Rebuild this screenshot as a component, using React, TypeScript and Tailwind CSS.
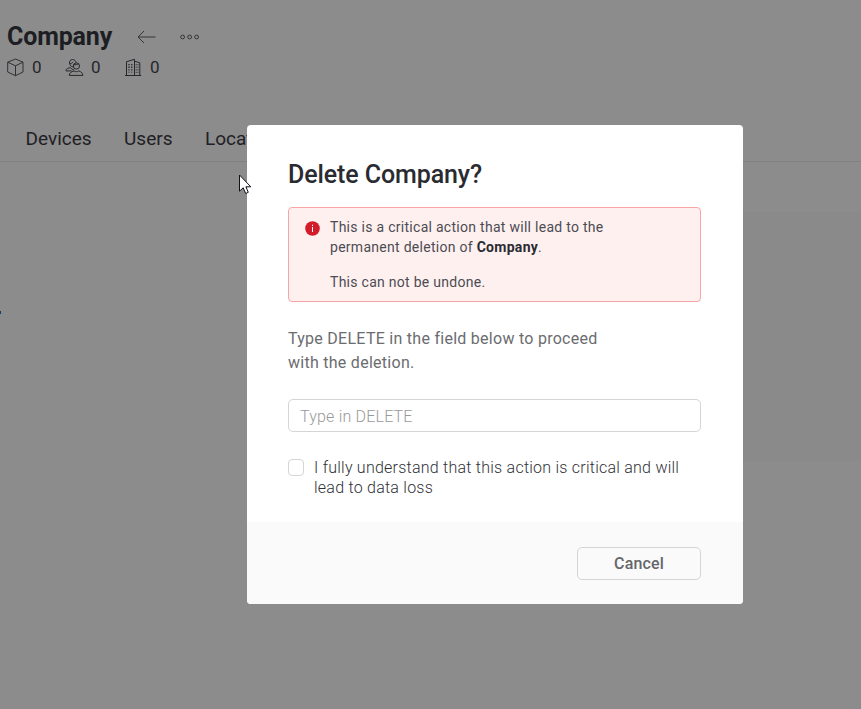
import type { ReactNode } from 'react';

function CubeIcon() {
  return (
    <svg width="18" height="19" viewBox="0 0 18 19" fill="none" stroke="#26272d" strokeWidth="0.9" strokeLinejoin="round">
      <path d="M8.5 1 L16 4.2 V14 L8.5 17.7 L0.7 14 V4.2 Z M0.7 4.2 L8.5 7.8 L16 4.2 M8.5 7.8 V17.7" />
    </svg>
  );
}

function UsersIcon() {
  return (
    <svg width="19" height="19" viewBox="0 0 19 19" fill="none" stroke="#26272d" strokeWidth="1" strokeLinejoin="round">
      <circle cx="11.4" cy="8" r="3.1" />
      <path d="M4.6 5.8 C4 3.2 5.5 1.6 7.4 1.5 C9.3 1.5 10.8 2.6 11.2 4.8 M4.6 5.6 C6.2 5.7 7.4 5 8.2 3.8 M4.8 5.8 C4.9 7.4 6.2 8.7 8.2 8.9 M8.5 6.6 C10.5 7 12.6 6.6 13.6 5.8" />
      <path d="M4.2 17.4 C4.3 15.2 6 13.9 9 12.9 C10.6 14 12.4 14 13.8 12.9 C16.4 13.9 17.8 15.2 17.9 17.4 Z" />
      <path d="M5.2 9.6 L2.6 10.4 C1.4 10.9 1 11.7 1 12.9 H6.6 M5.2 9.6 C6.2 10.8 7.4 11.5 9 12" />
    </svg>
  );
}

function BuildingIcon() {
  return (
    <svg width="18" height="19" viewBox="0 0 18 19" fill="none" stroke="#26272d" strokeWidth="1">
      <path d="M0 17.5 H16.2 M1.5 17.3 V3.7 L9.5 1.3 V17.3 M9.5 3.2 L14.8 4.8 V17.3" />
      <path d="M4 6 V14.5 M6.8 6 V14.5" strokeWidth="1.3" strokeDasharray="1.3 1.3" />
      <path d="M11.2 6 V15 M13 6 V15" strokeWidth="0.8" strokeDasharray="1.3 1.3" />
    </svg>
  );
}

function Stat({ icon, className }: { icon: ReactNode; className: string }) {
  return (
    <div className={`flex items-center ${className}`}>
      {icon}
      <span className="ml-[7px] text-[17px] leading-5 text-[#26272d]">0</span>
    </div>
  );
}

function PageHeader() {
  return (
    <header className="h-[162px] border-b border-[#818181]">
      <div className="flex h-[57px] items-center pl-[7px] pt-[17px]">
        <h1 className="w-[106px] whitespace-nowrap text-[25px] font-bold leading-8 tracking-[-0.15px] text-[#1d1e23]">Company</h1>
        <svg className="ml-6" width="19" height="14" viewBox="0 0 19 14" fill="none" stroke="#34353a">
          <path d="M7 1 L1 7 L7 13 M1 7 H18.5" />
        </svg>
        <svg className="ml-6" width="20" height="6" viewBox="0 0 20 6" fill="none" stroke="#34353a">
          <circle cx="2.6" cy="3" r="1.9" />
          <circle cx="9.6" cy="3" r="1.9" />
          <circle cx="16.6" cy="3" r="1.9" />
        </svg>
      </div>
      <div className="flex h-5 items-center pl-[7px]">
        <Stat icon={<CubeIcon />} className="w-[58px]" />
        <Stat icon={<UsersIcon />} className="w-[60px]" />
        <Stat icon={<BuildingIcon />} className="w-[59px]" />
      </div>
      <nav className="flex pl-[25.5px] pt-[50px] text-[19px] leading-6 text-[#1f2025]">
        <span className="w-[98.5px]">Devices</span>
        <span className="w-[81px]">Users</span>
        <span>Locations</span>
      </nav>
    </header>
  );
}

function DeleteDialog() {
  return (
    <div role="dialog" className="absolute left-[247px] top-[125px] flex h-[479px] w-[496px] flex-col overflow-hidden rounded-[4px] bg-white">
      <div className="h-[397px] px-[41px] pt-[34px]">
        <h2 className="whitespace-nowrap text-[25px] font-medium leading-8 tracking-[-0.1px] text-[#2a2b31]">Delete Company?</h2>
        <div className="mt-4 flex h-[95px] w-[413px] rounded-[4px] border border-[#faa5a5] bg-[#fff0f0] pl-4 pt-[9px]">
          <svg className="mt-[3.5px] shrink-0" width="15" height="15" viewBox="0 0 15 15">
            <circle cx="7.5" cy="7.5" r="7.3" fill="#d21c2a" />
            <path d="M7.5 6 V11 M7.5 3.7 V5" stroke="white" strokeWidth="1" />
          </svg>
          <div className="ml-[10px] whitespace-nowrap text-[14px] leading-5 tracking-[0.28px] text-[#4b4c52]">
            <p>This is a critical action that will lead to the</p>
            <p>
              permanent deletion of <strong className="font-bold text-[#2a2b31]">Company</strong>.
            </p>
            <p className="mt-[15px]">This can not be undone.</p>
          </div>
        </div>
        <p className="mt-[25px] whitespace-nowrap text-[16px] leading-6 tracking-[0.27px] text-[#6b6c70]">
          Type DELETE in the field below to proceed
          <br />
          with the deletion.
        </p>
        <input
          className="mt-6 block h-[33px] w-[413px] rounded-[5px] border border-[#d5d5d5] bg-white px-[11px] pt-[2px] font-[Roboto] text-[16px] font-light tracking-[0.2px] outline-none placeholder:text-[#99999b]"
          placeholder="Type in DELETE"
        />
        <label className="mt-[26px] flex whitespace-nowrap text-[16px] font-light leading-5 tracking-[0.24px] text-[#303137]">
          <input type="checkbox" className="mr-[10px] mt-px h-[17px] w-4 shrink-0 appearance-none rounded-[4px] border border-[#d5d5d5] bg-white" />
          <span>
            I fully understand that this action is critical and will
            <br />
            lead to data loss
          </span>
        </label>
      </div>
      <footer className="flex flex-1 justify-end bg-[#fafafa] pr-[42px] pt-[25px]">
        <button className="h-[33px] w-[124px] rounded-[5px] border border-[#d5d5d5] text-[16px] font-medium tracking-[0.15px] text-[#65666a]">Cancel</button>
      </footer>
    </div>
  );
}

export default function App() {
  return (
    <div className="relative h-[709px] w-[861px] overflow-hidden bg-[#8c8c8c] font-[Roboto,sans-serif]">
      <PageHeader />
      <main className="flex h-[547px] justify-between">
        <div className="mt-[149px] h-[3px] w-px bg-[#123d68]" />
        <div className="mt-[50px] h-[249px] w-[130px] bg-[#8a8a8a]" />
      </main>
      <DeleteDialog />
      <svg className="absolute left-[239px] top-[174px]" width="13" height="21" viewBox="0 0 13 21">
        <path d="M0.5 1 V17.2 L4.2 13.8 L6.7 19.5 L9.3 18.3 L6.9 12.8 H11.8 Z" fill="white" stroke="#11111a" />
      </svg>
    </div>
  );
}
